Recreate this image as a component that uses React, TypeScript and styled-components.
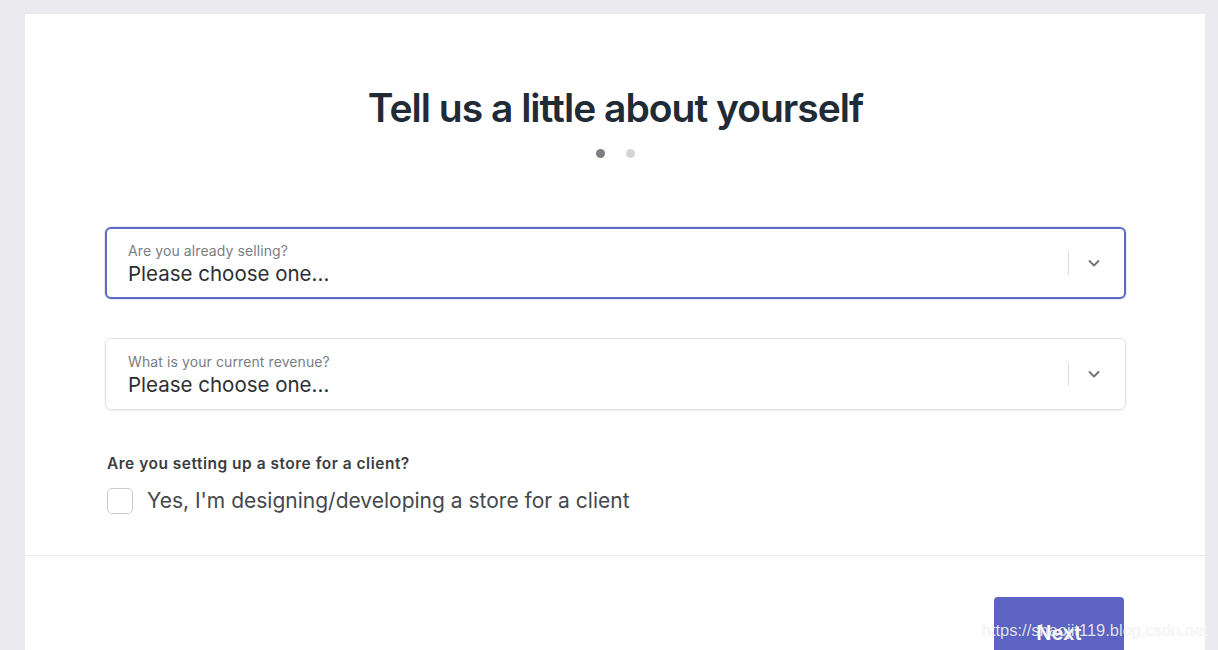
import styled, { createGlobalStyle } from "styled-components";

const Global = createGlobalStyle`
  html, body {
    margin: 0;
    padding: 0;
    background: #ebebef;
    overflow: hidden;
  }
  body {
    font-family: Inter, "Noto Sans", "Liberation Sans", sans-serif;
    color: #212b36;
  }
`;

const Page = styled.div`
  height: 650px;
  padding: 14px 13px 0 25px;
  box-sizing: border-box;
  position: relative;
`;

const Card = styled.div`
  background: #ffffff;
  height: 100%;
  display: flex;
  flex-direction: column;
`;

const Body = styled.div`
  padding: 71px 79px 0 80px;
  display: flex;
  flex-direction: column;
`;

const Title = styled.h1`
  margin: 0;
  text-align: center;
  font-size: 39px;
  line-height: 46px;
  font-weight: 600;
  letter-spacing: -1px;
  color: #212b36;
`;

const Dots = styled.div`
  display: flex;
  justify-content: center;
  gap: 21px;
  margin-top: 18px;
`;

const Dot = styled.span<{ $active?: boolean }>`
  width: 9px;
  height: 9px;
  border-radius: 50%;
  background: ${(p) => (p.$active ? "#7d7f85" : "#d3d4d8")};
`;

const Fields = styled.div`
  margin-top: 69px;
  display: flex;
  flex-direction: column;
  gap: 39px;
`;

const Select = styled.div<{ $focused?: boolean }>`
  height: 72px;
  box-sizing: border-box;
  border-radius: 6px;
  border: ${(p) => (p.$focused ? "2px solid #5c6ac4" : "1px solid #dfe3e8")};
  box-shadow: ${(p) =>
    p.$focused ? "0 0 0 1px rgba(92,106,196,0.15)" : "0 1px 2px rgba(0,0,0,0.08)"};
  display: flex;
  align-items: center;
  padding: 0 ${(p) => (p.$focused ? "22px 0 21px" : "23px 0 22px")};
`;

const SelectText = styled.div`
  flex: 1;
  display: flex;
  flex-direction: column;
  padding-top: 4px;
`;

const SelectLabel = styled.span`
  font-size: 14px;
  line-height: 18px;
  color: #7a7d82;
  letter-spacing: 0.1px;
`;

const SelectValue = styled.span`
  font-size: 20.5px;
  line-height: 28px;
  color: #2d2f33;
  letter-spacing: 0;
`;

const Divider = styled.span`
  width: 1px;
  height: 24px;
  background: #dcdde0;
  margin-right: 17px;
`;

const Chevron = styled.svg`
  width: 16px;
  height: 16px;
  color: #6f7378;
`;

const Question = styled.div`
  margin-top: 44px;
  margin-left: 2px;
  font-size: 15.5px;
  font-weight: 600;
  line-height: 20px;
  color: #3a3d42;
  letter-spacing: 0.5px;
`;

const CheckRow = styled.label`
  display: flex;
  align-items: center;
  gap: 14px;
  margin-top: 14px;
  margin-left: 2px;
`;

const Box = styled.span`
  width: 26px;
  height: 26px;
  border: 1.5px solid #c9cbd0;
  border-radius: 5px;
  box-sizing: border-box;
  background: #fff;
`;

const CheckText = styled.span`
  font-size: 21px;
  line-height: 26px;
  color: #45484d;
  letter-spacing: 0;
`;

const Footer = styled.div`
  margin-top: 41px;
  border-top: 1px solid #ececef;
  padding: 41px 81px 0 0;
  display: flex;
  justify-content: flex-end;
`;

const NextButton = styled.button`
  width: 130px;
  height: 72px;
  flex-shrink: 0;
  border: none;
  border-radius: 4px;
  background: #5c63c2;
  color: #fff;
  font-family: inherit;
  font-size: 20px;
  font-weight: 600;
`;

const Watermark = styled.span`
  position: absolute;
  right: 10px;
  bottom: 10px;
  font-family: "Liberation Sans", Arial, sans-serif;
  font-size: 16.5px;
  color: rgba(255, 255, 255, 0.85);
  text-shadow: 0 0 1px rgba(0, 0, 0, 0.15);
  pointer-events: none;
`;

function Dropdown({ label, focused }: { label: string; focused?: boolean }) {
  return (
    <Select $focused={focused}>
      <SelectText>
        <SelectLabel>{label}</SelectLabel>
        <SelectValue>Please choose one...</SelectValue>
      </SelectText>
      <Divider />
      <Chevron viewBox="0 0 16 16" fill="none">
        <path d="M3.5 6l4.5 4.5L12.5 6" stroke="currentColor" strokeWidth="1.8" strokeLinecap="round" strokeLinejoin="round" />
      </Chevron>
    </Select>
  );
}

export default function App() {
  return (
    <>
      <Global />
      <Page>
        <Card>
          <Body>
            <Title>Tell us a little about yourself</Title>
            <Dots>
              <Dot $active />
              <Dot />
            </Dots>
            <Fields>
              <Dropdown label="Are you already selling?" focused />
              <Dropdown label="What is your current revenue?" />
            </Fields>
            <Question>Are you setting up a store for a client?</Question>
            <CheckRow>
              <Box />
              <CheckText>Yes, I'm designing/developing a store for a client</CheckText>
            </CheckRow>
          </Body>
          <Footer>
            <NextButton>Next</NextButton>
          </Footer>
        </Card>
        <Watermark>https://shaojit119.blog.csdn.net</Watermark>
      </Page>
    </>
  );
}
